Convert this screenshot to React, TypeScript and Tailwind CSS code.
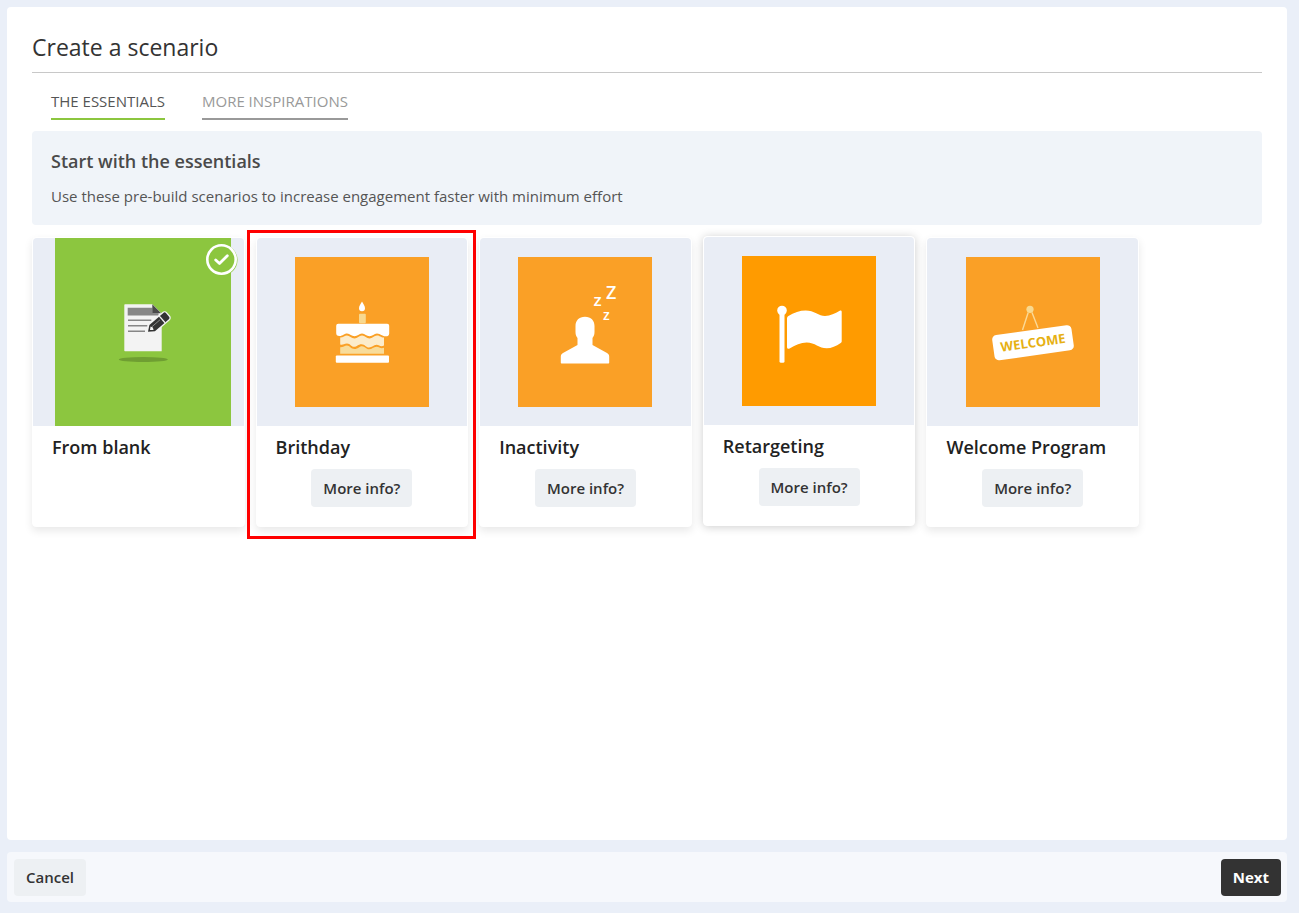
import { useState } from "react"
import { clsx } from "clsx"

const TABS = ["THE ESSENTIALS", "MORE INSPIRATIONS"]

function BlankArt() {
  return (
    <svg viewBox="0 0 176 188" className="h-full" aria-hidden="true">
      <rect width="176" height="188" fill="#8cc63f" />
      <ellipse cx="88.3" cy="121.5" rx="24.5" ry="2.4" fill="#6f9e32" />
      <path d="M70 66.3H97.5L106.7 75.5V113.2H70a.7.7 0 0 1-.7-.7V67a.7.7 0 0 1 .7-.7Z" fill="#f3f3f3" />
      <path d="M72.7 69.7H97.5V75.2H103.5V77.6H72.7Z" fill="#868686" />
      <path d="M97.3 66.3 106.2 75.2H97.3Z" fill="#4a4a4a" />
      <path d="M73 82.3H96.3M73 87.7H92.3M73 93.3H90" stroke="#868686" strokeWidth="1.6" />
      <g transform="translate(93 93.8) rotate(-41)">
        <path d="M0 0 5.5-4.2H24a1.8 1.8 0 0 1 1.8 1.8V2.4a1.8 1.8 0 0 1-1.8 1.8H5.5Z" fill="#333" stroke="#f3f3f3" strokeWidth="2.6" strokeLinejoin="round" paintOrder="stroke" />
        <path d="M18.8-4.4V4.4" stroke="#f3f3f3" strokeWidth="1.3" />
        <path d="M6-1.2H17" stroke="#999" strokeWidth=".8" />
        <path d="M2.6 0 5.4-2.3 6.4 0 5.4 2.3Z" fill="#f3f3f3" />
      </g>
    </svg>
  )
}

function CakeArt() {
  return (
    <svg viewBox="0 0 134 150" className="h-full" aria-hidden="true">
      <rect width="134" height="150" fill="#faa026" />
      <path d="M67 44.5C68.3 47 70 49 70 51.2a3 3 0 0 1-6 0C64 49 65.7 47 67 44.5Z" fill="#fff" />
      <rect x="64" y="56.7" width="6.8" height="9.5" rx="1" fill="#f8d990" />
      <path d="M45.2 80.5C48.5 80.5 49.5 78.5 52 78.5S56.5 81.5 59.5 81.5 64 78.5 67 78.5 71.5 81.5 74.5 81.5 79 78.5 82 78.5 85.5 80.5 89 80.5V88.5C85.5 90.5 84.5 87.7 81.5 87.7S77 90.5 74 90.5 70 87.2 66.5 87.2 62 89.8 59 89.8 55.5 86.5 52 86.5 48 88.5 45.2 87.5Z" fill="#fceccb" />
      <path d="M45.2 90.3C48 90.5 49.5 88.5 52 88.5S56 92 59.5 92 64 89.2 67 89.2 71 92.3 74 92.3 78.5 89.7 81.5 89.7 85.5 92.3 89 90.8V96.8H45.2Z" fill="#f8dc9a" />
      <path d="M43.2 66.7H92.2a2 2 0 0 1 2 2V76.5C94.2 80 90 79.8 87.5 78.5 85 77.2 83.5 76.5 82 76.5 79 76.5 77.5 79.3 74.5 79.3S70 76.5 67 76.5 62.5 79.3 59.5 79.3 55 76.5 52 76.5C49 76.5 48 79 44.5 79 42 79 41.2 77.8 41.2 76V68.7a2 2 0 0 1 2-2Z" fill="#fff" />
      <rect x="40.8" y="98.5" width="53.2" height="7.2" rx="1" fill="#fff" />
    </svg>
  )
}

function SleeperArt() {
  return (
    <svg viewBox="0 0 134 150" className="h-full" aria-hidden="true">
      <rect width="134" height="150" fill="#faa026" />
      <path d="M67 59.7C73 59.7 76.5 63.5 76.5 69V75C76.5 78 75.7 79.5 74.5 81V88L89 96C90.5 97 91.2 98 91.2 99.5V105.8a.7.7 0 0 1-.7.7H43.5a.7.7 0 0 1-.7-.7V99.5C42.8 98 43.5 97 45 96L59.5 88V81C58.3 79.5 57.5 78 57.5 75V69C57.5 63.5 61 59.7 67 59.7Z" fill="#fff" />
      <g fill="#fff" textAnchor="middle" className="font-['Open_Sans',sans-serif] font-semibold">
        <text x="93.3" y="42.3" fontSize="18">Z</text>
        <text x="79.5" y="49.3" fontSize="17">z</text>
        <text x="88.4" y="62.5" fontSize="14">z</text>
      </g>
    </svg>
  )
}

function FlagArt() {
  return (
    <svg viewBox="0 0 134 150" className="h-full" aria-hidden="true">
      <rect width="134" height="150" fill="#ff9b00" />
      <circle cx="40" cy="54.5" r="4.8" fill="#fff" />
      <rect x="37.5" y="54.5" width="5" height="52.3" rx="1.5" fill="#fff" />
      <path d="M45 62.5C45 61.5 45.3 60.8 46 60.3 52 56.5 58 54.5 63.7 54.5 72 54.5 77 60 83 60 88.5 60 93 57.5 97.7 54.8 99 54.1 99.7 54.7 99.7 56V85C99.7 86 99.5 86.5 98.7 87 94 90.2 89.5 92.3 84.7 92.3 77 92.3 73 86.5 64.7 86.5 58.5 86.5 53.5 89 48 92.2 46.3 93.2 45 92.8 45 91Z" fill="#fff" />
    </svg>
  )
}

function WelcomeArt() {
  return (
    <svg viewBox="0 0 134 150" className="h-full" aria-hidden="true">
      <rect width="134" height="150" fill="#faa026" />
      <path d="M62.2 55.5 56.5 73M66 55.5 72 71" stroke="#fbd996" strokeWidth="1.4" />
      <circle cx="64" cy="52.3" r="3.6" fill="#f8d990" />
      <g transform="translate(67 85.7) rotate(-8)">
        <rect x="-40" y="-12.7" width="80" height="25.4" rx="4.5" fill="#fff" />
        <text y="4.6" textAnchor="middle" fontSize="13" fill="#e6b012" className="font-['Open_Sans',sans-serif] font-bold">
          WELCOME
        </text>
      </g>
    </svg>
  )
}

const SCENARIOS = [
  { title: "From blank", art: BlankArt, selected: true },
  { title: "Brithday", art: CakeArt, info: true, marked: true },
  { title: "Inactivity", art: SleeperArt, info: true },
  { title: "Retargeting", art: FlagArt, info: true, raised: true },
  { title: "Welcome Program", art: WelcomeArt, info: true },
]

type Scenario = (typeof SCENARIOS)[number]

function ScenarioCard({ title, art: Art, info, selected, marked, raised }: Scenario) {
  return (
    <article
      className={clsx(
        "relative rounded border border-white bg-white pb-[19px]",
        raised ? "-translate-y-px shadow-[0_1px_10px_rgba(0,0,0,0.2)]" : "shadow-[0_4px_8px_rgba(0,0,0,0.09)]",
      )}
    >
      <div className={clsx("flex h-[188px] justify-center rounded-t bg-[#e9edf5]", info ? "py-[19px]" : "pl-2.5")}>
        <Art />
      </div>
      {selected && (
        <svg viewBox="0 0 32 32" className="absolute top-1.5 right-1.5 size-8" aria-hidden="true">
          <circle cx="16" cy="16" r="15.5" fill="#8cc63f" />
          <circle cx="15.5" cy="15.5" r="14.2" fill="none" stroke="#fff" strokeWidth="2.6" />
          <path d="M9.7 16 13.5 19.5 21.3 11.8" fill="none" stroke="#fff" strokeWidth="2.8" strokeLinecap="round" strokeLinejoin="round" />
        </svg>
      )}
      <h3 className="px-[19px] pt-[7px] text-lg leading-7 font-semibold text-[#222]">{title}</h3>
      {info && (
        <div className="mt-2 flex justify-center">
          <button type="button" className="h-[38px] rounded bg-[#edf0f3] px-3 text-[15px] font-semibold text-[#333]">
            More info?
          </button>
        </div>
      )}
      {marked && <div className="pointer-events-none absolute -top-2 -right-[9px] -bottom-[13px] -left-[10px] border-3 border-[#f00]" />}
    </article>
  )
}

export default function App() {
  const [tab, setTab] = useState(TABS[0])

  return (
    <div className="flex min-h-screen flex-col gap-3 bg-[#eaeff8] pt-[7px] pr-3 pb-[11px] pl-[7px] font-['Open_Sans',sans-serif] text-[15px] text-[#555]">
      <main className="flex-1 rounded bg-white px-[25px] pt-6">
        <h1 className="border-b border-[#c8c8c8] pb-2 text-[23px] leading-[33px] text-[#333]">Create a scenario</h1>

        <nav className="flex gap-[37px] px-[19px] pt-[17px]">
          {TABS.map((name) => (
            <button
              key={name}
              type="button"
              onClick={() => setTab(name)}
              className={clsx(
                "border-b-2 pb-[5px] leading-[23px]",
                tab === name ? "border-[#8cc63f] text-[#555]" : "border-[#999] text-[#999]",
              )}
            >
              {name}
            </button>
          ))}
        </nav>

        <section className="mt-[11px] rounded bg-[#f0f4f9] px-[19px] py-[18px]">
          <h2 className="text-lg leading-6 font-semibold text-[#4a4a4a]">Start with the essentials</h2>
          <p className="mt-3 leading-[22px]">
            Use these pre-build scenarios to increase engagement faster with minimum effort
          </p>
        </section>

        <div className="mt-3 grid w-9/10 grid-cols-5 gap-[11px]">
          {SCENARIOS.map((scenario) => (
            <ScenarioCard key={scenario.title} {...scenario} />
          ))}
        </div>
      </main>

      <footer className="flex items-center justify-between rounded bg-[#f6f8fc] pt-[7px] pr-1.5 pb-1.5 pl-[7px]">
        <button type="button" className="h-[37px] rounded bg-[#edf0f3] px-3 font-semibold text-[#333]">
          Cancel
        </button>
        <button type="button" className="h-[37px] rounded bg-[#333] px-3 font-bold text-white">
          Next
        </button>
      </footer>
    </div>
  )
}
